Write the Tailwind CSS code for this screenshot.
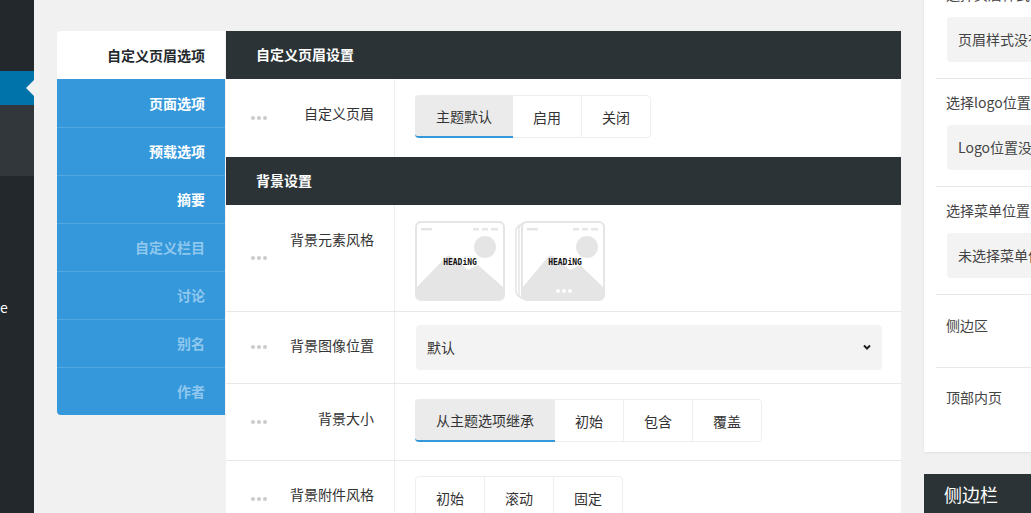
<!DOCTYPE html>
<html>
<head>
<meta charset="utf-8">
<script src="https://cdn.jsdelivr.net/npm/@tailwindcss/browser@4"></script>
</head>
<body class="bg-[#f1f1f1] font-['Noto_Sans_CJK_SC','Noto_Sans',sans-serif] text-sm text-[#444]">
<div class="flex w-[1031px] h-[513px] overflow-hidden">

  <!-- wp admin menu -->
  <aside class="w-[34px] shrink-0 bg-[#23282d] pt-[71px] text-white">
    <div class="relative h-[34px] bg-[#0073aa]">
      <span class="absolute right-0 top-[9px] border-y-[8px] border-r-[8px] border-y-transparent border-r-[#f1f1f1]"></span>
    </div>
    <div class="h-[71px] bg-[#32373c]"></div>
    <div class="mt-[121px] h-[20px] leading-[20px]">e</div>
  </aside>

  <!-- options panel -->
  <main class="w-[867px] shrink-0 pl-[23px] pt-[31px]">
    <div class="flex w-[844px] items-start">
      <nav class="w-[168px] shrink-0 text-right font-bold">
        <div class="h-[48px] rounded-tl bg-white pr-[20px] leading-[48px] text-[#23282d]">自定义页眉选项</div>
        <div class="h-[48px] bg-[#3498db] pr-[20px] leading-[48px] text-white">页面选项</div>
        <div class="h-[48px] border-t border-white/15 bg-[#3498db] pr-[20px] leading-[46px] text-white">预载选项</div>
        <div class="h-[48px] border-t border-white/15 bg-[#3498db] pr-[20px] leading-[46px] text-white">摘要</div>
        <div class="h-[48px] border-t border-white/15 bg-[#3498db] pr-[20px] leading-[46px] text-[#8fc7ee]">自定义栏目</div>
        <div class="h-[48px] border-t border-white/15 bg-[#3498db] pr-[20px] leading-[46px] text-[#8fc7ee]">讨论</div>
        <div class="h-[48px] border-t border-white/15 bg-[#3498db] pr-[20px] leading-[46px] text-[#8fc7ee]">别名</div>
        <div class="h-[48px] rounded-bl border-t border-white/15 bg-[#3498db] pr-[20px] leading-[46px] text-[#8fc7ee]">作者</div>
      </nav>

      <div class="ml-px w-[675px] shrink-0 bg-white text-[#333]">
        <h3 class="h-[48px] bg-[#2b3336] pl-[30px] text-sm font-bold leading-[46px] text-white">自定义页眉设置</h3>

        <div class="flex h-[78px]">
          <div class="flex w-[169px] shrink-0 items-center justify-between border-r border-[#eee] pl-[25px] pr-[20px]">
            <span class="flex gap-[2px]"><i class="size-[4px] rounded-full bg-[#ccc]"></i><i class="size-[4px] rounded-full bg-[#ccc]"></i><i class="size-[4px] rounded-full bg-[#ccc]"></i></span>
            <label class="self-start pt-[24px] leading-[20px]">自定义页眉</label>
          </div>
          <div class="pl-[20px] pt-[16px]">
            <div class="flex h-[43px] rounded border border-[#eee] leading-[42px]">
              <span class="-my-px -ml-px w-[98px] rounded-l border-b-2 border-[#3498db] bg-[#ebebeb] text-center">主题默认</span>
              <span class="w-[68px] text-center">启用</span>
              <span class="w-[69px] border-l border-[#eee] text-center">关闭</span>
            </div>
          </div>
        </div>

        <h3 class="h-[48px] bg-[#2b3336] pl-[30px] text-sm font-bold leading-[46px] text-white">背景设置</h3>

        <div class="flex h-[107px] border-b border-[#e8e8e8]">
          <div class="flex w-[169px] shrink-0 items-center justify-between border-r border-[#eee] pl-[25px] pr-[20px]">
            <span class="flex gap-[2px]"><i class="size-[4px] rounded-full bg-[#ccc]"></i><i class="size-[4px] rounded-full bg-[#ccc]"></i><i class="size-[4px] rounded-full bg-[#ccc]"></i></span>
            <label class="self-start pt-[24px] leading-[20px]">背景元素风格</label>
          </div>
          <div class="flex gap-[10px] pl-[20px] pt-[16px]">
            <svg width="90" height="80" viewBox="0 0 90 80">
              <rect x="1" y="1" width="88" height="78" rx="5" fill="#fff" stroke="#e5e5e5" stroke-width="2"/>
              <path d="M1 67 L31 36 Q34 33 37 36 L53 49 L63 44 L89 67 V74 Q89 79 84 79 H6 Q1 79 1 74 Z" fill="#e5e5e5"/>
              <circle cx="70" cy="26" r="11" fill="#e5e5e5"/>
              <path d="M6 7h11v2.500H6zM58 7h6v2.500h-6zM67 7h6v2.500h-6zM76 7h7v2.500h-7z" fill="#e5e5e5"/>
              <text x="45" y="44" text-anchor="middle" font-family="DejaVu Sans Mono" font-weight="700" font-size="8" fill="#111">HEADiNG</text>
            </svg>
            <svg width="90" height="80" viewBox="0 0 90 80">
              <path d="M5 4 Q1 6 1 10 V70 Q1 74 5 76 M8 2 Q4 4 4 8 V72 Q4 76 8 78" fill="none" stroke="#e5e5e5" stroke-width="1.500"/>
              <rect x="7" y="1" width="82" height="78" rx="5" fill="#fff" stroke="#e5e5e5" stroke-width="2"/>
              <path d="M7 67 L33 36 Q36 33 39 36 L55 49 L65 44 L89 67 V74 Q89 79 84 79 H12 Q7 79 7 74 Z" fill="#e5e5e5"/>
              <circle cx="72" cy="26" r="11" fill="#e5e5e5"/>
              <path d="M12 7h11v2.500H12zM58 7h6v2.500h-6zM67 7h6v2.500h-6zM76 7h7v2.500h-7z" fill="#e5e5e5"/>
              <circle cx="43" cy="70" r="2" fill="#fff"/><circle cx="49" cy="70" r="2" fill="#fff"/><circle cx="55" cy="70" r="2" fill="#fff"/>
              <text x="50" y="44" text-anchor="middle" font-family="DejaVu Sans Mono" font-weight="700" font-size="8" fill="#111">HEADiNG</text>
            </svg>
          </div>
        </div>

        <div class="flex h-[72px] border-b border-[#e8e8e8]">
          <div class="flex w-[169px] shrink-0 items-center justify-between border-r border-[#eee] pl-[25px] pr-[20px]">
            <span class="-mt-[2px] flex gap-[2px]"><i class="size-[4px] rounded-full bg-[#ccc]"></i><i class="size-[4px] rounded-full bg-[#ccc]"></i><i class="size-[4px] rounded-full bg-[#ccc]"></i></span>
            <label class="self-start pt-[23px] leading-[20px]">背景图像位置</label>
          </div>
          <div class="pl-[21px] pt-[13px]">
            <div class="relative w-[466px]">
              <select class="h-[45px] w-full appearance-none rounded bg-[#f3f3f3] pb-[2px] pl-[11px] pr-[30px]"><option>默认</option></select>
              <svg class="absolute right-[11px] top-[19px]" width="8" height="7" viewBox="0 0 8 7"><path d="M1 1.500 L4 4.500 L7 1.500" fill="none" stroke="#222" stroke-width="2"/></svg>
            </div>
          </div>
        </div>

        <div class="flex h-[77px] border-b border-[#e8e8e8]">
          <div class="flex w-[169px] shrink-0 items-center justify-between border-r border-[#eee] pl-[25px] pr-[20px]">
            <span class="flex gap-[2px]"><i class="size-[4px] rounded-full bg-[#ccc]"></i><i class="size-[4px] rounded-full bg-[#ccc]"></i><i class="size-[4px] rounded-full bg-[#ccc]"></i></span>
            <label class="self-start pt-[24px] leading-[20px]">背景大小</label>
          </div>
          <div class="pl-[20px] pt-[15px]">
            <div class="flex h-[43px] rounded border border-[#eee] leading-[42px]">
              <span class="-my-px -ml-px w-[140px] rounded-l border-b-2 border-[#3498db] bg-[#ebebeb] text-center">从主题选项继承</span>
              <span class="w-[68px] text-center">初始</span>
              <span class="w-[69px] border-l border-[#eee] text-center">包含</span>
              <span class="w-[69px] border-l border-[#eee] text-center">覆盖</span>
            </div>
          </div>
        </div>

        <div class="flex h-[78px]">
          <div class="flex w-[169px] shrink-0 items-center justify-between border-r border-[#eee] pl-[25px] pr-[20px]">
            <span class="-mt-[2px] flex gap-[2px]"><i class="size-[4px] rounded-full bg-[#ccc]"></i><i class="size-[4px] rounded-full bg-[#ccc]"></i><i class="size-[4px] rounded-full bg-[#ccc]"></i></span>
            <label class="self-start pt-[23px] leading-[20px]">背景附件风格</label>
          </div>
          <div class="pl-[20px] pt-[15px]">
            <div class="flex h-[43px] rounded border border-[#eee] leading-[42px]">
              <span class="w-[68px] text-center">初始</span>
              <span class="w-[69px] border-l border-[#eee] text-center">滚动</span>
              <span class="w-[69px] border-l border-[#eee] text-center">固定</span>
            </div>
          </div>
        </div>
      </div>
    </div>
  </main>

  <!-- right meta boxes -->
  <div class="ml-[23px] w-[107px] shrink-0 -mt-[29px]">
    <div class="h-[481px] overflow-hidden bg-white pl-[12px] shadow-[0_1px_2px_rgba(0,0,0,0.08)] whitespace-nowrap">
      <div class="h-[108px] border-b border-[#e8e8e8] pl-[11px] pt-[14px]">
        <p class="-ml-px leading-[18px]">选择页眉样式</p>
        <div class="mt-[14px] h-[45px] w-[160px] rounded-l bg-[#f3f3f3] pl-[11px] leading-[44px]">页眉样式没有选择</div>
      </div>
      <div class="h-[108px] border-b border-[#e8e8e8] pl-[11px] pt-[14px]">
        <p class="-ml-px leading-[18px]">选择logo位置</p>
        <div class="mt-[14px] h-[45px] w-[160px] rounded-l bg-[#f3f3f3] pl-[11px] leading-[44px]">Logo位置没有选择</div>
      </div>
      <div class="h-[108px] border-b border-[#e8e8e8] pl-[11px] pt-[14px]">
        <p class="-ml-px leading-[18px]">选择菜单位置</p>
        <div class="mt-[14px] h-[45px] w-[160px] rounded-l bg-[#f3f3f3] pl-[11px] leading-[44px]">未选择菜单位置</div>
      </div>
      <div class="h-[73px] border-b border-[#e8e8e8] pl-[10px] pt-[20px] leading-[20px]">侧边区</div>
      <div class="pl-[10px] pt-[19px] leading-[20px]">顶部内页</div>
    </div>
    <div class="mt-[22px] h-[60px] bg-[#2b3336] pl-[20px] pt-[7px] text-[18px] leading-[26px] text-white">侧边栏</div>
  </div>
</div>
</body>
</html>
